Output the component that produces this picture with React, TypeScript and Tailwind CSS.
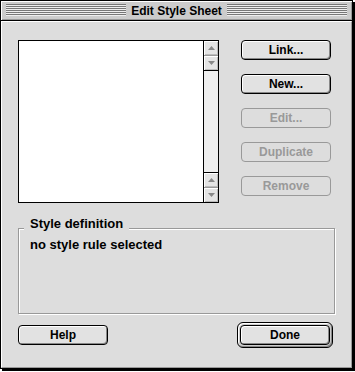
import type { ReactNode } from 'react';

const FONT = "font-['Liberation_Sans',Arial,sans-serif] font-bold text-[12px] leading-[14px]";
const FONT_LG = "font-['Liberation_Sans',Arial,sans-serif] font-bold text-[13px] leading-[15px]";

function Arrow({ up }: { up?: boolean }) {
  return (
    <div className="h-[14px] flex items-center justify-center bg-[#e4e4e4] shadow-[inset_1px_1px_0_#fff,inset_-1px_-1px_0_#bbb]">
      <svg width="7" height="4" viewBox="0 0 7 4" className="block">
        <path d={up ? 'M0 4 L3.5 0 L7 4 Z' : 'M0 0 L7 0 L3.5 4 Z'} fill="#888" />
      </svg>
    </div>
  );
}

function ListBox() {
  return (
    <div className="w-[201px] h-[163px] border border-black bg-white flex">
      <div className="flex-1" />
      <div className="w-[15px] border-l border-black flex flex-col">
        <Arrow up />
        <div className="h-px bg-[#999]" />
        <Arrow />
        <div className="h-px bg-black" />
        <div className="flex-1 bg-[#eeeeee]" />
        <div className="h-px bg-black" />
        <Arrow up />
        <div className="h-px bg-[#999]" />
        <Arrow />
      </div>
    </div>
  );
}

function Button({ children, disabled }: { children: ReactNode; disabled?: boolean }) {
  return (
    <button
      disabled={disabled}
      className={[
        'w-[90px] h-[20px] rounded-[4px] border flex items-center justify-center',
        FONT,
        disabled
          ? 'border-[#999] text-[#999] bg-[#dddddd]'
          : 'border-black text-black bg-[#e2e2e2] shadow-[inset_1px_1px_0_#fff,inset_-1px_-1px_0_#888]',
      ].join(' ')}
    >
      {children}
    </button>
  );
}

export default function App() {
  return (
    <div className="w-[355px] h-[372px] bg-white">
      <div className="w-[353px] h-[369px] border border-black shadow-[2px_2px_0_#000] bg-[#dddddd] flex flex-col">
        {/* Title bar */}
        <div className="h-[20px] shrink-0 bg-[#cccccc] border-b border-black shadow-[inset_1px_1px_0_#fff,inset_-1px_-1px_0_#999] flex items-center px-[5px] gap-[4px]">
          <div className="flex-1 h-[12px] mt-[-1px] bg-[repeating-linear-gradient(to_bottom,#777_0px,#777_1px,#eeeeee_1px,#eeeeee_2px)]" />
          <span className={`${FONT} text-black px-[1px]`}>Edit Style Sheet</span>
          <div className="flex-1 h-[12px] mt-[-1px] bg-[repeating-linear-gradient(to_bottom,#777_0px,#777_1px,#eeeeee_1px,#eeeeee_2px)]" />
        </div>

        {/* Content */}
        <div className="flex-1 flex flex-col pl-[16px] pt-[18px] border-t border-l border-white border-r border-b border-r-[#999] border-b-[#999]">
          <div className="flex">
            <ListBox />
            <div className="ml-[22px] flex flex-col gap-[14px]">
              <Button>Link...</Button>
              <Button>New...</Button>
              <Button disabled>Edit...</Button>
              <Button disabled>Duplicate</Button>
              <Button disabled>Remove</Button>
            </div>
          </div>

          {/* Style definition group */}
          <div className="relative mt-[25px] w-[317px] h-[86px] border border-[#999] shadow-[inset_1px_1px_0_#fff,1px_1px_0_#fff] pl-[11px] pt-[8px]">
            <span className={`absolute top-[-13px] left-[5px] px-[6px] bg-[#dddddd] text-black ${FONT_LG}`}>
              Style definition
            </span>
            <p className={`${FONT_LG} text-black`}>no style rule selected</p>
          </div>

          {/* Bottom buttons */}
          <div className="mt-[8px] w-[315px] flex items-center justify-between">
            <Button>Help</Button>
            <div className="rounded-[6px] border border-black bg-[#cccccc] p-[2px] shadow-[inset_1px_1px_0_#fff,inset_-1px_-1px_0_#888]">
              <Button>Done</Button>
            </div>
          </div>
        </div>
      </div>
    </div>
  );
}
